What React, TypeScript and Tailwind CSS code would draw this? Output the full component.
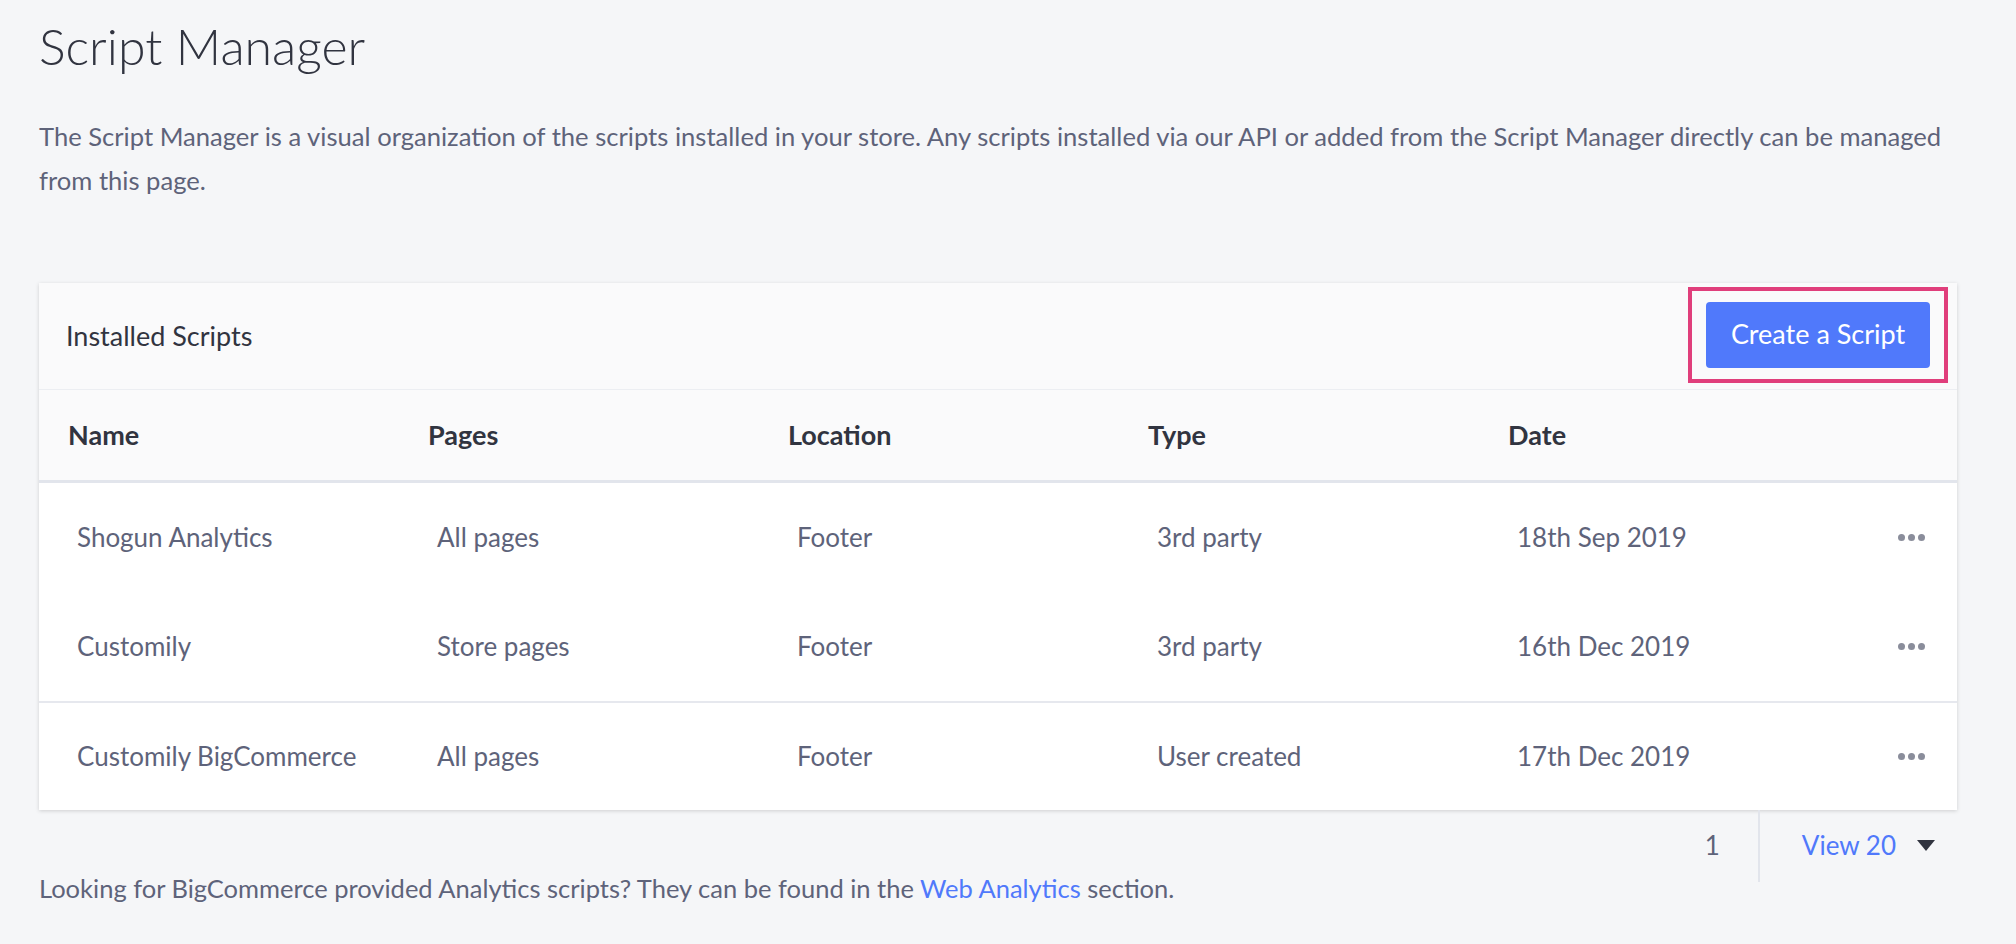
const scripts = [
  { name: 'Shogun Analytics', pages: 'All pages', location: 'Footer', type: '3rd party', date: '18th Sep 2019', divider: false },
  { name: 'Customily', pages: 'Store pages', location: 'Footer', type: '3rd party', date: '16th Dec 2019', divider: false },
  { name: 'Customily BigCommerce', pages: 'All pages', location: 'Footer', type: 'User created', date: '17th Dec 2019', divider: true },
];

const columns = ['Name', 'Pages', 'Location', 'Type', 'Date'];

function MoreDots() {
  return (
    <div className="flex items-center gap-[3px]">
      <span className="w-[7px] h-[7px] rounded-full bg-[#8a8d9b]"></span>
      <span className="w-[7px] h-[7px] rounded-full bg-[#8a8d9b]"></span>
      <span className="w-[7px] h-[7px] rounded-full bg-[#8a8d9b]"></span>
    </div>
  );
}

export default function App() {
  return (
    <div className="min-h-[944px] bg-[#f5f6f8] font-['Lato',sans-serif] text-[#313440] pl-[39px] pr-[59px] pt-[14px]">
      <h1 className="text-[50px] leading-[64px] font-light text-[#313440]">Script Manager</h1>
      <p className="mt-[36px] text-[25.6px] leading-[44px] text-[#5e637a]">
        The Script Manager is a visual organization of the scripts installed in your store. Any scripts installed via our API or added from the Script Manager directly can be managed from this page.
      </p>

      <div className="mt-[81px] bg-white shadow-[0_1px_4px_rgba(0,0,0,0.16)]">
        <div className="h-[107px] bg-[#fafafb] flex items-center justify-between pl-[27px] pr-[9px] border-b border-[#eceef2]">
          <h2 className="text-[27px] text-[#313440]">Installed Scripts</h2>
          <div className="border-[4px] border-[#e03e7b] px-[14px] py-[11px] -mt-[3px]">
            <button className="w-[224px] h-[66px] rounded-[4px] bg-[#5079fb] text-white text-[27px]">Create a Script</button>
          </div>
        </div>

        <div className="h-[93px] bg-[#fafafb] grid grid-cols-[360px_360px_360px_360px_1fr] items-center pl-[29px] border-b-[3px] border-[#e2e5ec]">
          {columns.map((col) => (
            <div key={col} className="text-[27px] font-bold text-[#313440]">{col}</div>
          ))}
        </div>

        {scripts.map((s) => (
          <div
            key={s.name}
            className={`h-[109px] grid grid-cols-[360px_360px_360px_360px_1fr_auto] items-center pl-[38px] pr-[32px] text-[26px] text-[#5e637a] ${s.divider ? 'border-t-2 border-[#e6e8ee]' : ''}`}
          >
            <div>{s.name}</div>
            <div>{s.pages}</div>
            <div>{s.location}</div>
            <div>{s.type}</div>
            <div>{s.date}</div>
            <MoreDots />
          </div>
        ))}
      </div>

      <div className="flex justify-end h-[70px]">
        <div className="flex items-center h-full text-[26px] text-[#5e637a] pr-[38px]">1</div>
        <div className="w-[2px] h-[72px] bg-[#e2e5ec]"></div>
        <div className="flex items-center h-full pl-[42px] pr-[22px] gap-[21px]">
          <span className="text-[26px] text-[#5079fb]">View 20</span>
          <svg width="18" height="11" viewBox="0 0 18 11">
            <polygon points="0,0 18,0 9,11" fill="#313440" />
          </svg>
        </div>
      </div>

      <p className="-mt-[10px] text-[25.5px] leading-[36px] text-[#5e637a]">
        Looking for BigCommerce provided Analytics scripts? They can be found in the <a className="text-[#5079fb]">Web Analytics</a> section.
      </p>
    </div>
  );
}
